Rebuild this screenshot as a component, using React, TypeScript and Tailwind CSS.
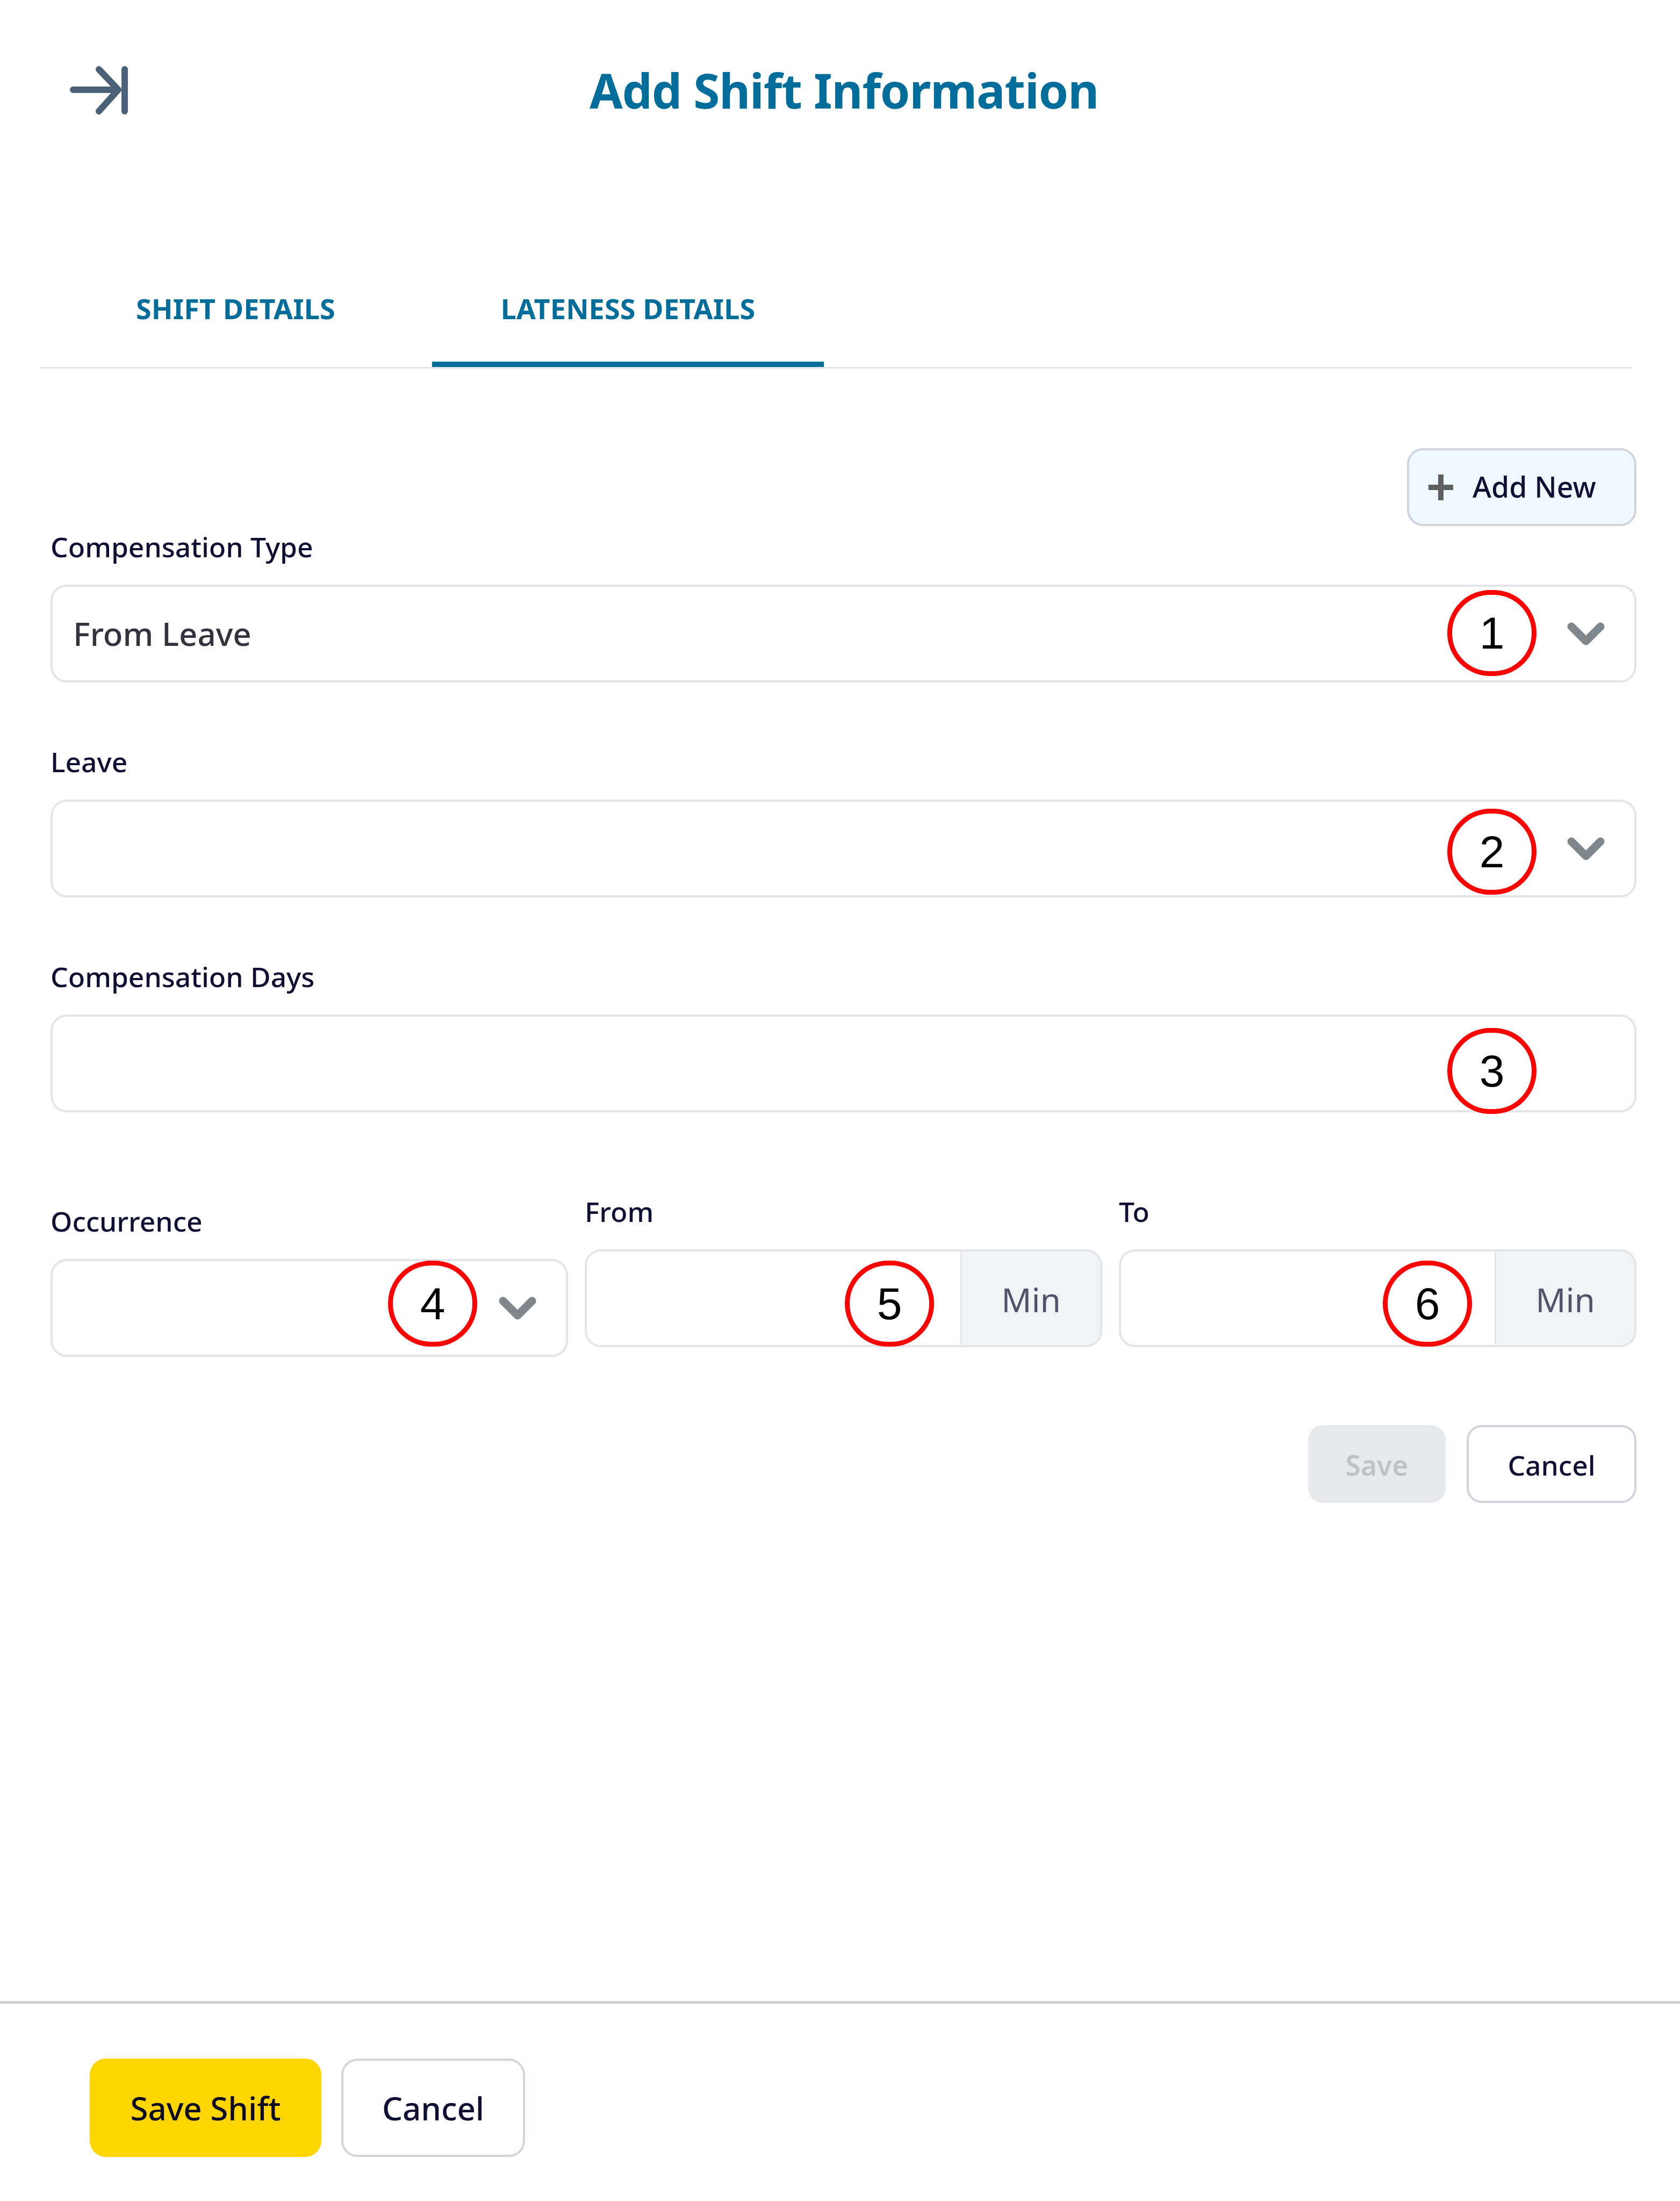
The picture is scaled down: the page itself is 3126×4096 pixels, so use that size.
import React from "react";

const Chevron = () => (
  <svg width="72" height="46" viewBox="0 0 72 46" fill="none" className="shrink-0 mt-[2px]">
    <path d="M9 9 L36 36 L63 9" stroke="#7f868c" strokeWidth="15" strokeLinecap="round" strokeLinejoin="round" />
  </svg>
);

const Mark = ({ n, className }: { n: number; className: string }) => (
  <div
    className={`absolute w-[166px] h-[160px] rounded-full border-[9px] border-[#ff0000] bg-white flex items-center justify-center text-black text-[84px] leading-none ${className}`}
    style={{ fontFamily: '"Liberation Sans", Arial, sans-serif' }}
  >
    {n}
  </div>
);

const Label = ({ children, className = "" }: { children: React.ReactNode; className?: string }) => (
  <div className={`text-[51.5px] leading-[72px] font-medium text-[#0f0f33] ${className}`}>{children}</div>
);

const Box = ({ chevron, children }: { chevron?: boolean; children?: React.ReactNode }) => (
  <div className="h-[182px] rounded-[30px] border-[4px] border-[#e3e5e8] bg-white flex items-center justify-between pl-[38px] pr-[54px] text-[60px] font-medium text-[#33333d]">
    <span>{children}</span>
    {chevron && <Chevron />}
  </div>
);

const MinBox = () => (
  <div className="h-[182px] rounded-[30px] border-[4px] border-[#e3e5e8] bg-white flex overflow-hidden">
    <div className="flex-1" />
    <div className="w-[260px] border-l-[3px] border-[#e3e5e8] bg-[#f2f3f5] flex items-center justify-center pt-[4px] text-[62px] text-[#52526b]">
      Min
    </div>
  </div>
);

export default function App() {
  return (
    <div
      className="relative w-[3126px] h-[4096px] bg-white flex flex-col overflow-hidden"
      style={{ fontFamily: '"Noto Sans", sans-serif' }}
    >
      <header className="h-[340px] pt-[123px] pl-[130px] flex items-start">
        <svg width="110" height="90" viewBox="0 0 110 90" fill="none" className="shrink-0">
          <path d="M102 6 V84 M6 44 H90 M54 6 L90 44 L54 84" stroke="#4b6178" strokeWidth="12" strokeLinecap="round" strokeLinejoin="round" />
        </svg>
        <h1 className="ml-[857px] -mt-[10px] text-[89px] leading-[110px] font-bold tracking-[-1px] text-[#006d9b]">Add Shift Information</h1>
      </header>

      <div className="mt-[162px] ml-[74px] mr-[89px] h-[184px] border-b-[3px] border-[#e5e7eb] flex pl-[51px] gap-[52px]">
        <div className="h-[184px] px-[128px] pt-[36px] text-[52px] leading-[72px] font-bold tracking-[0.2px] text-[#006d9b]">SHIFT DETAILS</div>
        <div className="h-[181px] px-[128px] pt-[36px] text-[52px] leading-[72px] font-bold tracking-[0.2px] text-[#006d9b] border-b-[10px] border-[#006d9b]">LATENESS DETAILS</div>
      </div>

      <div className="pl-[94px] pr-[81px] flex flex-col">
        <div className="mt-[148px] flex justify-end">
          <button className="w-[427px] h-[145px] rounded-[30px] border-[4px] border-[#d1d5db] bg-[#f0f8ff] flex items-center pl-[36px] gap-[36px] text-[53.5px] font-medium text-[#0f0f33]">
            <svg width="46" height="48" viewBox="0 0 46 48" className="shrink-0">
              <path d="M23 0 V48 M0 24 H46" stroke="#5f5f5f" strokeWidth="10" />
            </svg>
            <span>Add New</span>
          </button>
        </div>
        <Label className="mt-[2px]">Compensation Type</Label>
        <div className="mt-[35px]"><Box chevron>From Leave</Box></div>
        <Label className="mt-[111px]">Leave</Label>
        <div className="mt-[35px]"><Box chevron /></div>
        <Label className="mt-[111px]">Compensation Days</Label>
        <div className="mt-[35px]"><Box /></div>

        <div className="mt-[148px] grid grid-cols-3 gap-[31px] items-start">
          <div className="mt-[18px]">
            <Label>Occurrence</Label>
            <div className="mt-[35px]"><Box chevron /></div>
          </div>
          <div>
            <Label>From</Label>
            <div className="mt-[35px]"><MinBox /></div>
          </div>
          <div>
            <Label>To</Label>
            <div className="mt-[35px]"><MinBox /></div>
          </div>
        </div>

        <div className="mt-[127px] flex justify-end gap-[39px]">
          <button className="w-[256px] h-[145px] rounded-[28px] bg-[#e7e9ec] pt-[4px] text-[51.5px] font-semibold text-[#c0c2c9]">Save</button>
          <button className="w-[316px] h-[145px] rounded-[28px] border-[4px] border-[#d1d5db] bg-white pt-[4px] text-[51.5px] font-medium text-[#0f0f33]">Cancel</button>
        </div>
      </div>

      <div className="mt-auto border-t-[5px] border-[#d1d1d1] h-[372px] pl-[167px] pt-[102px] flex items-start gap-[37px]">
        <button className="w-[431px] h-[183px] rounded-[30px] bg-[#ffd500] text-[60px] font-medium text-[#0c0c20]">Save Shift</button>
        <button className="w-[342px] h-[183px] rounded-[30px] border-[4px] border-[#d1d5db] bg-white text-[60px] font-medium text-[#0f0f33]">Cancel</button>
      </div>

      <Mark n={1} className="left-[2693px] top-[1098px]" />
      <Mark n={2} className="left-[2693px] top-[1505px]" />
      <Mark n={3} className="left-[2693px] top-[1913px]" />
      <Mark n={4} className="left-[722px] top-[2346px]" />
      <Mark n={5} className="left-[1572px] top-[2346px]" />
      <Mark n={6} className="left-[2573px] top-[2346px]" />
    </div>
  );
}
